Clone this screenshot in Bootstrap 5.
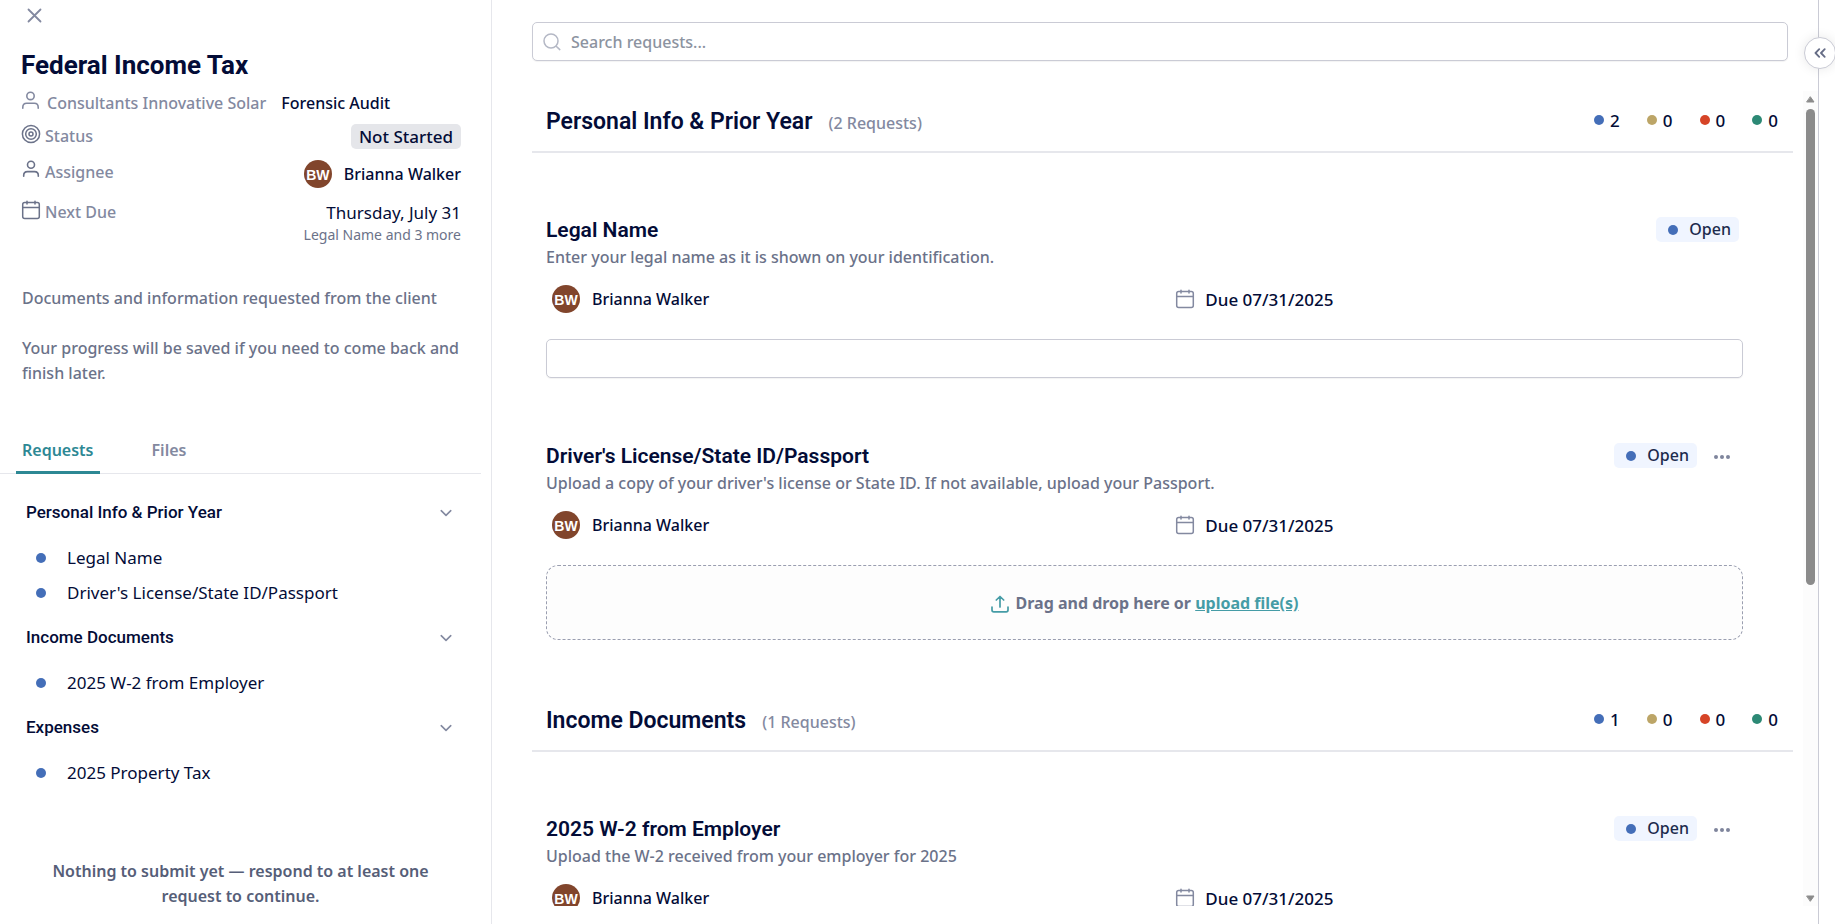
<!DOCTYPE html>
<html lang="en">
<head>
<meta charset="utf-8">
<meta name="viewport" content="width=device-width, initial-scale=1">
<title>Federal Income Tax</title>
<link href="https://cdn.jsdelivr.net/npm/bootstrap@5.3.0/dist/css/bootstrap.min.css" rel="stylesheet">
<style>
  :root { --navy:#030c37; --label:#8389a0; --muted:#6b7289; --teal:#2d8894; --blue:#446eb8; --line:#e6e7ec; --edge:#cacbd5; }
  body { font: 500 16px/25px "Noto Sans", "Open Sans", sans-serif; color: var(--navy); background: #fff; }
  svg { fill: none; stroke: currentColor; stroke-linecap: round; stroke-linejoin: round; flex: none; display: block; }
  h1, h2, h3, h4 { font-family: Roboto, "Liberation Sans", sans-serif; margin: 0; color: var(--navy); }
  h1 { font-size: 26px; line-height: 32px; font-weight: 700; }
  h2 { font-size: 23px; line-height: 32px; font-weight: 600; }
  h3 { font-size: 21px; line-height: 26px; font-weight: 600; }
  h4 { font-size: 17px; line-height: 25px; font-weight: 500; }
  p { margin: 0; }
  .plain { background: none; border: 0; padding: 0; color: inherit; font: inherit; text-align: left; }
  .label-tone { color: var(--label); }
  .muted-tone { color: var(--muted); }
  .navy-tone { color: var(--navy); }
  .roomy { font-size: 17px; }
  .regular { font-weight: 400; }

  .side { flex: 0 0 492px; border-right: 1px solid var(--line); padding: 6px 10px 15px 0; }
  .side-body { padding: 0 20px 0 21px; }
  .side-body h1 { margin-top: 23px; }
  .fact { margin-top: 8px; }
  .client { margin-top: 10px; gap: 7px; }
  .assignee, .next-due { margin-top: 11px; }
  .next-due { padding-top: 1px; }
  .intro { margin-top: 41px; padding-left: 1px; }
  .intro p + p { margin-top: 25px; }
  .status-tag { background: #e5e6ea; border-radius: 5px; padding: 0 8px; }
  .avatar { width: 28px; height: 28px; border-radius: 50%; background: #81452c; color: #fff; font: 700 14px/30px "Liberation Sans", sans-serif; text-align: center; flex: none; }
  .due-note { font-size: 14px; line-height: 20px; }
  .tab-bar { border-bottom: 1px solid var(--line); padding-left: 16px; gap: 46px; margin-top: 52px; }
  .tab-bar button { padding: 0 6px 8px; border-bottom: 3px solid transparent; margin-bottom: -1px; font-weight: 600; color: var(--label); }
  .tab-bar button.active { color: var(--teal); border-color: var(--teal); border-radius: 3px 3px 0 0; }
  .outline { padding: 26px 29px 0 26px; }
  .outline ul { list-style: none; margin: 20px 0; padding: 0 0 0 10px; display: grid; gap: 10px; }
  .outline a { color: var(--navy); text-decoration: none; display: flex; align-items: center; gap: 21px; font-weight: 400; font-size: 17px; }
  .dot { width: 10px; height: 10px; border-radius: 50%; background: var(--blue); flex: none; }
  .gold { background: #bca567; } .red { background: #d64427; } .green { background: #2c8975; }
  .foot-note { color: #565e78; font-weight: 600; padding: 0 40px; text-align: center; }

  .work { border-right: 1px solid var(--edge); padding: 22px 0 18px 40px; min-width: 0; }
  .field { height: 39px; border: 1px solid var(--edge); border-radius: 5px; box-shadow: 0 1px 1px #0000000d; background: #fff; color: var(--navy); width: 100%; }
  .search { margin: 0 30px 30px 0; padding-left: 10px; gap: 9px; color: #b4b8c5; }
  .search input { border: 0; outline: 0; flex: 1; background: none; font-weight: 500; padding: 2px 0 0 1px; }
  .search input::placeholder { color: #8c93a0; opacity: 1; }
  .feed { padding-right: 10px; overflow: hidden; }
  .group-head { height: 62px; padding: 2px 15px 0 14px; border-bottom: 2px solid var(--line); }
  .group + .group { margin-top: 50px; }
  .counts { gap: 27px; font-size: 17px; padding-bottom: 4px; }
  .counts span { display: flex; align-items: center; gap: 6px; }
  .request { padding: 64px 50px 0 14px; }
  .request + .request { padding-top: 65px; }
  .request h3 { margin-bottom: 2px; }
  .who { padding: 15px 0 0 6px; }
  .answer { margin-top: 26px; }
  .due { margin-left: 2px; }
  .open-tag { background: #f0f5ff; color: #1c2b4d; border-radius: 5px; padding: 0 8px 0 12px; gap: 11px; }
  .more { width: 32px; margin: 0 1px 0 9px; color: #7f859c; }
  .assigned { flex: 0 0 52%; }
  .drop { height: 75px; border: 1px dashed #9a9eb0; border-radius: 12px; background: #fdfdfd; font-weight: 700; padding-top: 2px; }
  .drop a, .drop svg { color: #459ca6; }
  .drop svg { margin-right: 7px; }
  .bar { width: 15px; background: #fcfcfc; color: #8b8b8b; padding: 5px 0 4px; flex: none; }
  .bar svg { fill: currentColor; }
  .thumb { width: 9px; flex: 0 0 59%; margin-top: 6px; border-radius: 5px; background: #8b8b8b; }
  .rail { flex: 0 0 16px; }
  .collapse-btn { position: absolute; top: 37px; right: -1px; width: 32px; height: 32px; border-radius: 50%; border: 1px solid var(--edge); background: #fff; box-shadow: 0 0 12px #00000018; color: #666d86; }
</style>
</head>
<body>
<svg class="d-none">
  <symbol id="person" viewBox="0 0 18 18"><circle cx="9" cy="4.700" r="3.500"/><path d="M1.700 16.300v-1c0-2.200 1.500-3.700 3.700-3.700h7.200c2.200 0 3.700 1.500 3.700 3.700v1"/></symbol>
  <symbol id="target" viewBox="0 0 20 20"><circle cx="10" cy="10" r="8.600"/><circle cx="10" cy="10" r="5.300"/><circle cx="10" cy="10" r="2"/></symbol>
  <symbol id="calendar" viewBox="0 0 20 20"><rect x="1.700" y="2.600" width="16.600" height="15.800" rx="2"/><path d="M1.700 7.600h16.600M6 1.200v2.800M14 1.200v2.800"/></symbol>
  <symbol id="chevron" viewBox="0 0 12 8"><path d="M1.200 1.700 6 6.300l4.800-4.600"/></symbol>
  <symbol id="dots" viewBox="0 0 18 6"><g fill="currentColor" stroke="none"><circle cx="3" cy="3" r="2"/><circle cx="9" cy="3" r="2"/><circle cx="15" cy="3" r="2"/></g></symbol>
</svg>
<div class="d-flex vh-100 position-relative overflow-hidden">
  <aside class="side d-flex flex-column">
    <div class="side-body">
      <button class="plain d-block label-tone ms-1" aria-label="Close"><svg width="20" height="20" stroke-width="1.8"><path d="m3.500 3.500 12 12m0-12-12 12"/></svg></button>
      <h1>Federal Income Tax</h1>
      <div class="client d-flex label-tone"><svg width="19" height="19" stroke-width="1.5"><use href="#person"/></svg><span>Consultants Innovative Solar</span><a href="#" class="navy-tone text-decoration-none ms-2">Forensic Audit</a></div>
      <div class="fact d-flex justify-content-between">
        <span class="d-flex label-tone gap-1"><svg class="muted-tone" width="20" height="20" stroke-width="1.5"><use href="#target"/></svg>Status</span>
        <span class="status-tag roomy">Not Started</span>
      </div>
      <div class="assignee d-flex justify-content-between">
        <span class="d-flex label-tone gap-1"><svg class="muted-tone" width="20" height="18" stroke-width="1.6"><use href="#person"/></svg>Assignee</span>
        <span class="d-flex align-items-center"><span class="avatar me-2">BW</span><span class="ms-1">Brianna Walker</span></span>
      </div>
      <div class="next-due d-flex justify-content-between">
        <span class="d-flex label-tone gap-1"><svg class="muted-tone" width="20" height="20" stroke-width="1.5"><use href="#calendar"/></svg>Next Due</span>
        <span class="text-end roomy regular">Thursday, July 31<span class="due-note d-block muted-tone">Legal Name and 3 more</span></span>
      </div>
      <div class="intro muted-tone">
        <p>Documents and information requested from the client</p>
        <p>Your progress will be saved if you need to come back and finish later.</p>
      </div>
    </div>
    <div class="tab-bar d-flex" role="tablist">
      <button class="plain active" role="tab" aria-selected="true">Requests</button>
      <button class="plain" role="tab" aria-selected="false">Files</button>
    </div>
    <nav class="outline" aria-label="Requests">
      <button class="plain w-100 d-flex justify-content-between align-items-center"><h4>Personal Info &amp; Prior Year</h4><svg class="label-tone" width="12" height="8" stroke-width="1.6"><use href="#chevron"/></svg></button>
      <ul><li><a href="#r1"><span class="dot"></span>Legal Name</a></li><li><a href="#r2"><span class="dot"></span>Driver's License/State ID/Passport</a></li></ul>
      <button class="plain w-100 d-flex justify-content-between align-items-center"><h4>Income Documents</h4><svg class="label-tone" width="12" height="8" stroke-width="1.6"><use href="#chevron"/></svg></button>
      <ul><li><a href="#r3"><span class="dot"></span>2025 W-2 from Employer</a></li></ul>
      <button class="plain w-100 d-flex justify-content-between align-items-center"><h4>Expenses</h4><svg class="label-tone" width="12" height="8" stroke-width="1.6"><use href="#chevron"/></svg></button>
      <ul><li><a href="#r4"><span class="dot"></span>2025 Property Tax</a></li></ul>
    </nav>
    <p class="foot-note mt-auto">Nothing to submit yet — respond to at least one request to continue.</p>
  </aside>

  <main class="work flex-fill d-flex flex-column">
    <div class="d-flex"><label class="field search d-flex align-items-center"><svg width="18" height="18" stroke-width="1.5"><circle cx="8" cy="8" r="7"/><path d="m13.200 13.200 3.600 3.400"/></svg><input type="search" placeholder="Search requests..." aria-label="Search requests"></label></div>
    <div class="d-flex flex-fill overflow-hidden">
      <div class="feed flex-fill">
        <section class="group">
          <header class="group-head d-flex align-items-center justify-content-between">
            <div class="d-flex align-items-baseline gap-3"><h2>Personal Info &amp; Prior Year</h2><span class="label-tone">(2 Requests)</span></div>
            <div class="counts d-flex"><span><i class="dot"></i>2</span><span><i class="dot gold"></i>0</span><span><i class="dot red"></i>0</span><span><i class="dot green"></i>0</span></div>
          </header>
          <article class="request" id="r1">
            <div class="d-flex justify-content-between"><h3>Legal Name</h3><div class="d-flex align-items-start pe-1"><span class="open-tag d-flex align-items-center"><i class="dot"></i>Open</span></div></div>
            <p class="muted-tone">Enter your legal name as it is shown on your identification.</p>
            <div class="who d-flex align-items-center"><div class="assigned d-flex align-items-center me-1"><span class="avatar me-2">BW</span><span class="ms-1">Brianna Walker</span></div><svg class="label-tone me-2" width="20" height="20" stroke-width="1.5"><use href="#calendar"/></svg><span class="due roomy">Due 07/31/2025</span></div>
            <input class="field answer d-block" type="text" aria-label="Legal Name">
          </article>
          <article class="request" id="r2">
            <div class="d-flex justify-content-between"><h3>Driver's License/State ID/Passport</h3><div class="d-flex align-items-start pe-1"><span class="open-tag d-flex align-items-center"><i class="dot"></i>Open</span><button class="plain more d-flex justify-content-center align-self-center" aria-label="More"><svg width="18" height="6"><use href="#dots"/></svg></button></div></div>
            <p class="muted-tone">Upload a copy of your driver's license or State ID. If not available, upload your Passport.</p>
            <div class="who d-flex align-items-center"><div class="assigned d-flex align-items-center me-1"><span class="avatar me-2">BW</span><span class="ms-1">Brianna Walker</span></div><svg class="label-tone me-2" width="20" height="20" stroke-width="1.5"><use href="#calendar"/></svg><span class="due roomy">Due 07/31/2025</span></div>
            <div class="drop answer d-flex align-items-center justify-content-center muted-tone"><svg width="18" height="18" stroke-width="1.7"><path d="M1 12v3c0 1 .8 1.800 1.800 1.800h12.400c1 0 1.800-.8 1.800-1.800v-3M9 12V1.800M5.300 5 9 1.500 12.700 5"/></svg><span>Drag and drop here or <a href="#">upload file(s)</a></span></div>
          </article>
        </section>
        <section class="group">
          <header class="group-head d-flex align-items-center justify-content-between">
            <div class="d-flex align-items-baseline gap-3"><h2>Income Documents</h2><span class="label-tone">(1 Requests)</span></div>
            <div class="counts d-flex"><span><i class="dot"></i>1</span><span><i class="dot gold"></i>0</span><span><i class="dot red"></i>0</span><span><i class="dot green"></i>0</span></div>
          </header>
          <article class="request" id="r3">
            <div class="d-flex justify-content-between"><h3>2025 W-2 from Employer</h3><div class="d-flex align-items-start pe-1"><span class="open-tag d-flex align-items-center"><i class="dot"></i>Open</span><button class="plain more d-flex justify-content-center align-self-center" aria-label="More"><svg width="18" height="6"><use href="#dots"/></svg></button></div></div>
            <p class="muted-tone">Upload the W-2 received from your employer for 2025</p>
            <div class="who d-flex align-items-center"><div class="assigned d-flex align-items-center me-1"><span class="avatar me-2">BW</span><span class="ms-1">Brianna Walker</span></div><svg class="label-tone me-2" width="20" height="20" stroke-width="1.5"><use href="#calendar"/></svg><span class="due roomy">Due 07/31/2025</span></div>
          </article>
        </section>
      </div>
      <div class="bar d-flex flex-column align-items-center" aria-hidden="true">
        <svg width="9" height="7"><path d="M4.500 1 8 6H1Z"/></svg>
        <div class="thumb"></div>
        <svg class="mt-auto" width="9" height="7"><path d="M4.500 6 8 1H1Z"/></svg>
      </div>
    </div>
  </main>
  <div class="rail"></div>
  <button class="collapse-btn p-0 d-flex align-items-center justify-content-center" aria-label="Collapse panel"><svg width="12" height="10" stroke-width="1.8"><path d="M5.200 1.200 1.500 5l3.700 3.800M10.700 1.200 7 5l3.700 3.800"/></svg></button>
</div>
<script src="https://cdn.jsdelivr.net/npm/bootstrap@5.3.0/dist/js/bootstrap.bundle.min.js"></script>
</body>
</html>
